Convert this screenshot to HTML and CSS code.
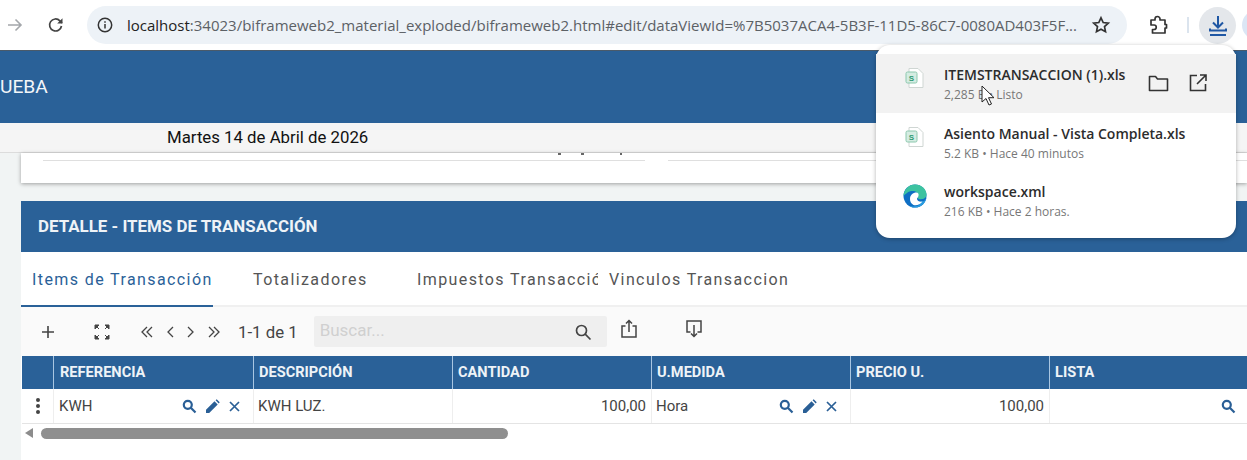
FILE: index.html
```html
<!DOCTYPE html>
<html lang="en">
<head>
  <meta charset="UTF-8" />
  <title>Items de Transacción</title>
  <link rel="stylesheet" href="styles.css">
</head>
<body>

  <div class="browser">
    <svg class="nav-forward" width="20" height="20" viewBox="0 0 20 20" fill="none" stroke="#a4a7ab" stroke-width="1.6"><path d="M3 10h13M10.500 4.500 16 10l-5.500 5.500"/></svg>
    <svg class="nav-reload" width="20" height="20" viewBox="0 0 20 20" fill="none" stroke="#444" stroke-width="1.7"><path d="M15.500 11a6 6 0 1 1-1.600-5.200L16 8"/><path d="M16.500 3.200V8.500h-5.300" stroke="none" fill="#444"/></svg>
    <div class="omnibox">
      <svg class="info-icon" width="18" height="18" viewBox="0 0 18 18" fill="none" stroke="#333" stroke-width="1.5"><circle cx="9" cy="9" r="6.700"/><path d="M9 8v4.500M9 5.200v1.500"/></svg>
      <span class="url"><span class="url-host">localhost</span>:34023/biframeweb2_material_exploded/biframeweb2.html#edit/dataViewId=%7B5037ACA4-5B3F-11D5-86C7-0080AD403F5F...</span>
      <svg class="star" width="20" height="20" viewBox="0 0 20 20" fill="none" stroke="#333" stroke-width="1.700"><path d="M10 2.800l2.200 4.700 5.100.6-3.800 3.500 1 5.100-4.500-2.500-4.500 2.500 1-5.100-3.800-3.500 5.100-.6z"/></svg>
    </div>
    <svg class="puzzle" width="22" height="22" viewBox="0 0 22 22" fill="none" stroke="#333" stroke-width="1.700"><path d="M4 6h4V5a2.500 2.500 0 0 1 5 0v1h5v4.500h1.500v3.500H18v5H5.500v-3.500H7a2 2 0 0 0 0-4.500H4z" stroke-linejoin="round"/></svg>
    <div class="bar-sep"></div>
    <div class="download-btn">
      <svg width="22" height="24" viewBox="0 0 22 24" fill="none" stroke="#1f57a4" stroke-width="2"><path d="M11 3v11M6 9.500l5 5 5-5M3 15.500v2h16v-2"/><path d="M3 22h16"/></svg>
    </div>
    <div class="avatar"></div>
  </div>

  <header class="app-header">UEBA</header>
  <div class="date-bar">Martes 14 de Abril de 2026</div>

  <main class="content">
    <div class="top-card">
      <div class="top-marks"><span></span><span></span><span class="top-mark-far"></span></div>
      <div class="top-lines">
        <div class="top-line top-line-left"></div>
        <div class="top-line top-line-right"></div>
      </div>
    </div>

    <section class="detail">
      <h2 class="detail-title">DETALLE - ITEMS DE TRANSACCIÓN</h2>

      <nav class="tabs">
        <span class="tab tab-active">Items de Transacción</span>
        <span class="tab tab-total">Totalizadores</span>
        <span class="tab tab-tax">Impuestos Transacción</span>
        <span class="tab tab-link">Vinculos Transacciones</span>
      </nav>

      <div class="toolbar">
        <svg class="tool-add" width="14" height="14" viewBox="0 0 14 14" stroke="#444" stroke-width="1.600"><path d="M7 1v12M1 7h12"/></svg>
        <svg class="tool-expand" width="16" height="16" viewBox="0 0 16 16" fill="#444" stroke="#444" stroke-width="1"><path d="M1 1h4L1 5zM1 1l4 4" /><path d="M15 1h-4l4 4zM15 1l-4 4"/><path d="M1 15h4l-4-4zM1 15l4-4"/><path d="M15 15h-4l4-4zM15 15l-4-4"/></svg>
        <div class="pager">
          <svg width="12" height="12" viewBox="0 0 12 12" fill="none" stroke="#444" stroke-width="1.300"><path d="M6 1 1 6l5 5M11 1 6 6l5 5"/></svg>
          <svg width="8" height="12" viewBox="0 0 8 12" fill="none" stroke="#444" stroke-width="1.300"><path d="M7 1 2 6l5 5"/></svg>
          <svg width="8" height="12" viewBox="0 0 8 12" fill="none" stroke="#444" stroke-width="1.300"><path d="M1 1l5 5-5 5"/></svg>
          <svg width="12" height="12" viewBox="0 0 12 12" fill="none" stroke="#444" stroke-width="1.300"><path d="M1 1l5 5-5 5M6 1l5 5-5 5"/></svg>
        </div>
        <span class="page-count">1-1 de 1</span>
        <div class="search">
          <span class="search-text">Buscar...</span>
          <svg width="18" height="18" viewBox="0 0 18 18" fill="none" stroke="#444" stroke-width="1.700"><circle cx="7.500" cy="7.500" r="5"/><path d="M11.200 11.200 16.500 16.500"/></svg>
        </div>
        <svg class="tool-share" width="18" height="20" viewBox="0 0 18 20" fill="none" stroke="#444" stroke-width="1.500"><path d="M5.500 7H2v11h14V7h-3.500M9 13V2M6 4.500 9 1.500l3 3"/></svg>
        <svg class="tool-import" width="18" height="20" viewBox="0 0 18 20" fill="none" stroke="#444" stroke-width="1.500"><path d="M5.500 13H2V2h14v11h-3.500M9 6v11M6 14.500l3 3 3-3"/></svg>
      </div>

      <div class="grid grid-head">
        <div class="cell"></div>
        <div class="cell">REFERENCIA</div>
        <div class="cell">DESCRIPCIÓN</div>
        <div class="cell">CANTIDAD</div>
        <div class="cell">U.MEDIDA</div>
        <div class="cell">PRECIO U.</div>
        <div class="cell">LISTA</div>
      </div>

      <div class="grid grid-row">
        <div class="cell cell-menu"><span></span><span></span><span></span></div>
        <div class="cell">KWH
          <div class="actions">
            <svg width="15" height="15" viewBox="0 0 15 15" fill="none" stroke="#2a5f96" stroke-width="2.200"><circle cx="5.800" cy="5.800" r="4"/><path d="M8.800 8.800 13.500 13.500"/></svg>
            <svg width="15" height="15" viewBox="0 0 15 15" fill="#2a5f96"><path d="M1 14v-3.200L9.500 2.300l3.200 3.200L4.200 14zM10.600 1.200 11.700.3l3 3-1 1.100z"/></svg>
            <svg width="13" height="13" viewBox="0 0 13 13" stroke="#2a5f96" stroke-width="1.700"><path d="M2 2l9 9M11 2l-9 9"/></svg>
          </div>
        </div>
        <div class="cell">KWH LUZ.</div>
        <div class="cell cell-num">100,00</div>
        <div class="cell">Hora
          <div class="actions">
            <svg width="15" height="15" viewBox="0 0 15 15" fill="none" stroke="#2a5f96" stroke-width="2.200"><circle cx="5.800" cy="5.800" r="4"/><path d="M8.800 8.800 13.500 13.500"/></svg>
            <svg width="15" height="15" viewBox="0 0 15 15" fill="#2a5f96"><path d="M1 14v-3.200L9.500 2.300l3.200 3.200L4.200 14zM10.600 1.200 11.700.3l3 3-1 1.100z"/></svg>
            <svg width="13" height="13" viewBox="0 0 13 13" stroke="#2a5f96" stroke-width="1.700"><path d="M2 2l9 9M11 2l-9 9"/></svg>
          </div>
        </div>
        <div class="cell cell-num">100,00</div>
        <div class="cell">
          <div class="actions">
            <svg width="15" height="15" viewBox="0 0 15 15" fill="none" stroke="#2a5f96" stroke-width="2.200"><circle cx="5.800" cy="5.800" r="4"/><path d="M8.800 8.800 13.500 13.500"/></svg>
          </div>
        </div>
      </div>

      <div class="hscroll">
        <span class="hscroll-arrow"></span>
        <span class="hscroll-thumb"></span>
      </div>
    </section>
  </main>

  <div class="downloads">
    <div class="dl-item dl-hover">
      <svg class="dl-icon" width="20" height="22" viewBox="0 0 20 22"><path d="M4 1.500h9l5 5v14H4z" fill="#fff" stroke="#cfd6d3"/><rect x="1" y="5" width="11" height="11" rx="1.500" fill="#d5ece2" stroke="#8cc8ae"/><text x="6.500" y="13.500" class="dl-s">S</text></svg>
      <div class="dl-text">
        <div class="dl-name">ITEMSTRANSACCION (1).xls</div>
        <div class="dl-meta">2,285 B • Listo</div>
      </div>
      <svg class="dl-folder" width="21" height="17" viewBox="0 0 21 17" fill="none" stroke="#333" stroke-width="1.600"><path d="M1.500 1.500h6l2 2.500h10v11.500h-18z" stroke-linejoin="round"/></svg>
      <svg class="dl-open" width="18" height="18" viewBox="0 0 18 18" fill="none" stroke="#333" stroke-width="1.600"><path d="M8 1.500H1.500v15h15V10M11 1h6v6M17 1 8 10"/></svg>
    </div>
    <div class="dl-item">
      <svg class="dl-icon" width="20" height="22" viewBox="0 0 20 22"><path d="M4 1.500h9l5 5v14H4z" fill="#fff" stroke="#cfd6d3"/><rect x="1" y="5" width="11" height="11" rx="1.500" fill="#d5ece2" stroke="#8cc8ae"/><text x="6.500" y="13.500" class="dl-s">S</text></svg>
      <div class="dl-text">
        <div class="dl-name">Asiento Manual - Vista Completa.xls</div>
        <div class="dl-meta">5.2 KB • Hace 40 minutos</div>
      </div>
    </div>
    <div class="dl-item">
      <svg class="dl-icon dl-edge" width="24" height="24" viewBox="0 0 24 24">
        <circle cx="12" cy="12" r="11.500" fill="#0f6fc4"/>
        <path d="M.5 12C1 5 6 .5 12 .5c6.500 0 11.500 4.700 11.500 10 0 3-2.500 4.700-5.500 4.700-2 0-3.500-.6-3.500-1.500 1-1 1.300-3-.2-4.800C12.500 6.500 7 6.500 4 9 2.500 10 1.200 11 .5 12z" fill="#3dc3a0"/>
        <path d="M23.500 12.500c0 6-5 11-11.500 11-2 0-4-.5-5.500-1.500 3 .7 7 .7 9.500-1 1-.7 1.500-2 1.500-3.500 2.500.5 6-1 6-5z" fill="#2a9de0"/>
        <path d="M7 15c0-4 3-6.500 6.500-6.500 1.500 0 2.500 1.500 2 3.500-.5 1.500-1.500 2-1.500 3 0 2 3 3 5.500 2.500-2 3-6 4.500-9 3.500C8 19.500 7 17.500 7 15z" fill="#fff"/>
      </svg>
      <div class="dl-text">
        <div class="dl-name">workspace.xml</div>
        <div class="dl-meta">216 KB • Hace 2 horas.</div>
      </div>
    </div>
  </div>

  <svg class="cursor" width="14" height="22" viewBox="0 0 14 22"><path d="M1 1v16l4-3.500 3 6.500 2.500-1-3-6.300h5.500z" fill="#fff" stroke="#222" stroke-width="1"/></svg>

</body>
</html>
```

FILE: styles.css
```css
html, body {
  margin: 0;
  padding: 0;
}
body {
  width: 1247px;
  height: 460px;
  overflow: hidden;
  position: relative;
  font-family: Roboto, "Liberation Sans", sans-serif;
  background: #f1f4f4;
  color: #444;
}

/* browser bar */
.browser {
  height: 50px;
  background: #fff;
  border-bottom: 1px solid #4a5a6a;
  display: flex;
  align-items: center;
}
.browser > * {
  flex: none;
}
.nav-forward {
  margin-left: 5px;
}
.nav-reload {
  margin-left: 21px;
}
.omnibox {
  width: 1040px;
  height: 38px;
  margin-left: 21px;
  border-radius: 19px;
  background: #edf2f7;
  display: flex;
  align-items: center;
}
.info-icon {
  margin-left: 9px;
  flex: none;
}
.url {
  margin-left: 13px;
  font-family: "Open Sans", "Liberation Sans", sans-serif;
  font-size: 15px;
  color: #5c6166;
  white-space: nowrap;
  flex: 1;
  overflow: hidden;
}
.url-host {
  color: #222;
}
.star {
  margin: 0 16px 0 6px;
  flex: none;
}
.puzzle {
  margin-left: 20px;
}
.bar-sep {
  width: 2px;
  height: 16px;
  background: #dbe4ee;
  margin-left: 18px;
}
.download-btn {
  width: 37px;
  height: 37px;
  border-radius: 50%;
  background: #e4e7eb;
  margin-left: 10px;
  display: flex;
  align-items: center;
  justify-content: center;
}
.avatar {
  width: 30px;
  height: 30px;
  border-radius: 50%;
  background: #dbe6f5;
  margin-left: 6px;
}

/* app header */
.app-header {
  height: 72px;
  line-height: 72px;
  background: #2a6198;
  color: #f3f6f9;
  font-size: 19.2px;
}
.date-bar {
  height: 30px;
  line-height: 29px;
  background: #f5f5f5;
  color: #111;
  font-size: 16.8px;
  padding-left: 167px;
  border-bottom: 1px solid #dcdcdc;
  box-sizing: border-box;
}

/* page content */
.content {
  padding-left: 21px;
}
.top-card {
  height: 30px;
  background: #fff;
  box-shadow: 0 1px 4px rgba(0,0,0,0.35);
  padding-left: 22px;
  position: relative;
}
.top-lines {
  display: flex;
  gap: 23px;
}
.top-line {
  height: 7px;
  border-bottom: 1px solid #dfdfdf;
}
.top-line-left {
  width: 602px;
}
.top-line-right {
  flex: 1;
}
.top-marks {
  position: absolute;
  left: 537px;
  top: 0;
  display: flex;
  gap: 20px;
}
.top-marks span {
  width: 3px;
  height: 2px;
  background: #666;
}
.top-marks .top-mark-far {
  width: 2px;
  margin-left: 16px;
}
.detail {
  margin-top: 18px;
  background: #fff;
}
.detail-title {
  margin: 0;
  height: 51px;
  line-height: 51px;
  padding-left: 17px;
  background: #2a6198;
  color: #eef3f7;
  font-size: 16.9px;
  font-weight: 700;
}

.tabs {
  height: 55px;
  display: flex;
  border-bottom: 2px solid #f0f0f0;
  box-sizing: border-box;
  font-size: 16px;
  letter-spacing: 1.4px;
  color: #555;
}
.tab {
  height: 55px;
  line-height: 55px;
  box-sizing: border-box;
  white-space: nowrap;
  overflow: hidden;
}
.tab-active {
  width: 192px;
  padding-left: 11px;
  color: #2a6198;
  border-bottom: 2px solid #2a6198;
}
.tab-total {
  width: 164px;
  padding-left: 40px;
}
.tab-tax {
  width: 221px;
  padding-left: 40px;
}
.tab-link {
  width: 191px;
  padding-left: 11px;
}

.toolbar {
  height: 49px;
  background: #fafafa;
  display: flex;
  align-items: center;
}
.tool-add {
  margin-left: 20px;
  flex: none;
}
.tool-expand {
  margin-left: 39px;
  flex: none;
}
.pager {
  margin-left: 31px;
  display: flex;
  gap: 13px;
  align-items: center;
}
.page-count {
  margin-left: 18px;
  font-size: 16.8px;
  color: #444;
  white-space: nowrap;
}
.search {
  width: 293px;
  height: 31px;
  margin-left: 16px;
  background: #efefef;
  border-radius: 2px;
  display: flex;
  align-items: center;
  justify-content: space-between;
  padding: 0 15px 0 6px;
  box-sizing: border-box;
  flex: none;
}
.search-text {
  font-size: 17px;
  color: #d0d0d0;
  padding-bottom: 3px;
}
.tool-share {
  margin: -5px 0 0 13px;
  flex: none;
}
.tool-import {
  margin: -5px 0 0 47px;
  flex: none;
}

/* table */
.grid {
  display: grid;
  grid-template-columns: 31px 200px 199px 199px 199px 199px 198px;
  margin-left: 1px;
}
.grid-head {
  height: 33px;
  background: #2a6198;
  color: #eef3f7;
  font-size: 14.6px;
  font-weight: 700;
}
.grid-head .cell {
  line-height: 33px;
  padding-left: 5px;
  border-left: 1px solid #a9c6e2;
  box-sizing: border-box;
}
.grid-head .cell:first-child {
  border-left: none;
}
.grid-head .cell:nth-child(2) {
  padding-left: 6px;
}
.grid-row {
  height: 35px;
  background: #fff;
  font-size: 15px;
  color: #444;
  border-bottom: 1px solid #e4e4e4;
  box-sizing: border-box;
}
.grid-row .cell {
  position: relative;
  display: flex;
  align-items: center;
  padding: 0 4px 0 4px;
  box-sizing: border-box;
  border-left: 1px solid #eee;
  height: 34px;
}
.grid-row .cell:first-child {
  border-left: none;
}
.grid-row .cell:nth-child(2) {
  padding-left: 5px;
}
.grid-row .cell-num {
  justify-content: flex-end;
  padding-right: 5px;
}
.grid-row .cell-menu {
  flex-direction: column;
  justify-content: center;
  gap: 2px;
  padding: 0;
}
.cell-menu span {
  width: 4px;
  height: 4px;
  border-radius: 50%;
  background: #444;
}
.actions {
  margin-left: auto;
  display: flex;
  align-items: center;
  gap: 8px;
  padding-right: 8px;
}
.grid-row .cell:last-child .actions {
  padding-right: 7px;
}

.hscroll {
  height: 36px;
  background: #fff;
  display: flex;
  padding: 4px 0 0 4px;
  box-sizing: border-box;
}
.hscroll-arrow {
  width: 0;
  height: 0;
  margin-top: 0;
  border-top: 5px solid transparent;
  border-bottom: 5px solid transparent;
  border-right: 8px solid #8c8c8c;
}
.hscroll-thumb {
  width: 467px;
  height: 11px;
  margin-left: 8px;
  border-radius: 6px;
  background: #8f8f8f;
}

/* chrome downloads bubble */
.downloads {
  position: absolute;
  left: 876px;
  top: 45px;
  width: 360px;
  height: 193px;
  padding-top: 9px;
  box-sizing: border-box;
  background: #fff;
  border-radius: 14px;
  box-shadow: 0 1px 4px rgba(0,0,0,0.3);
}
.dl-item {
  height: 58.500px;
  display: flex;
  align-items: center;
  padding-left: 29px;
}
.dl-hover {
  background: #f2f2f2;
}
.dl-icon {
  flex: none;
  align-self: flex-start;
  margin: 13px 19px 0 0;
}
.dl-edge {
  margin: 13px 17px 0 -2px;
}
.dl-s {
  font-size: 8px;
  font-weight: 700;
  fill: #2f9a72;
  text-anchor: middle;
  font-family: "Liberation Sans", sans-serif;
}
.dl-text {
  flex: 1;
  margin-top: 3px;
}
.dl-name {
  font-family: "Open Sans", "Liberation Sans", sans-serif;
  font-size: 14px;
  font-weight: 600;
  color: #2c2c2c;
  line-height: 19px;
  white-space: nowrap;
}
.dl-meta {
  font-family: "Open Sans", "Liberation Sans", sans-serif;
  font-size: 12px;
  color: #777;
  line-height: 19px;
  margin-top: 1px;
  white-space: nowrap;
}
.dl-folder {
  flex: none;
  margin-right: 20px;
}
.dl-open {
  flex: none;
  margin-right: 29px;
}
.cursor {
  position: absolute;
  left: 981px;
  top: 85px;
}
```
